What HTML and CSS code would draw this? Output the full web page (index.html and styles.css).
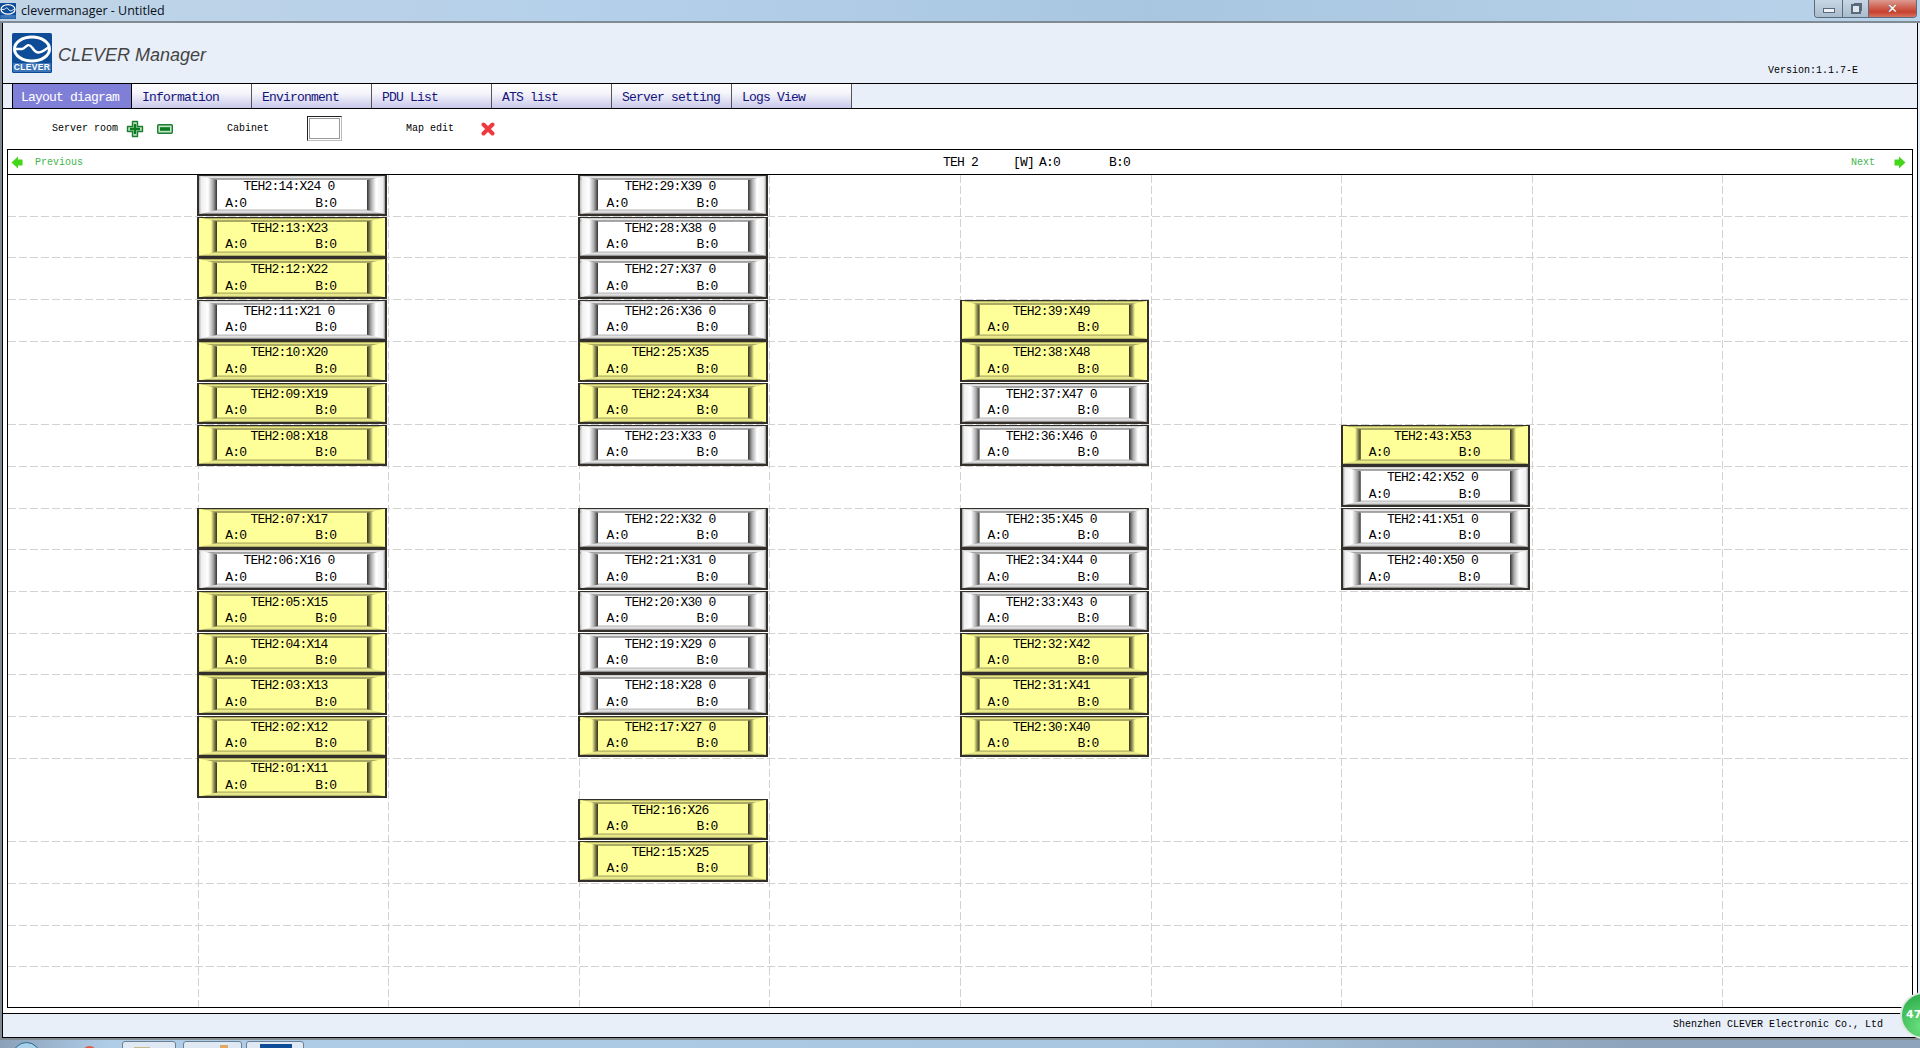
FILE: index.html
```html
<!DOCTYPE html>
<html lang="en">
<head>
  <meta charset="UTF-8" />
  <title>clevermanager - Untitled</title>
  <link rel="stylesheet" href="styles.css">
</head>
<body>
  <svg class="defs" width="0" height="0">
    <symbol id="logo" viewBox="0 0 40 40">
      <rect width="40" height="40" rx="1.5" fill="#0f4c97"/>
      <ellipse cx="20" cy="16" rx="17.5" ry="12" fill="none" stroke="#fff" stroke-width="3"/>
      <path d="M3 16 H10 C14 16 15 8 20.5 15 C25 22 29 20 37 14" fill="none" stroke="#fff" stroke-width="2.4"/>
      <rect x="1" y="30" width="38" height="9" fill="#3d76b8"/>
    </symbol>
  </svg>

  <div class="titlebar">
    <svg class="title-icon" width="16" height="16"><use href="#logo"/></svg>
    <span class="title-text">clevermanager - Untitled</span>
    <div class="win-btns">
      <span class="win-btn min"><i class="glyph-min"></i></span>
      <span class="win-btn"><i class="glyph-max"></i></span>
      <span class="win-btn close">&#x2715;</span>
    </div>
  </div>

  <div class="window">
    <header class="brand">
      <div class="logo">
        <svg width="40" height="40"><use href="#logo"/></svg>
        <span class="logo-word">CLEVER</span>
      </div>
      <span class="product">CLEVER Manager</span>
      <span class="version">Version:1.1.7-E</span>
    </header>

    <nav class="tabs">
      <a class="tab active">Layout diagram</a>
      <a class="tab">Information</a>
      <a class="tab">Environment</a>
      <a class="tab">PDU List</a>
      <a class="tab">ATS list</a>
      <a class="tab">Server setting</a>
      <a class="tab">Logs View</a>
    </nav>

    <main class="content">
      <div class="toolbar">
        <span class="tool-label room">Server room</span>
        <svg class="icon-plus" width="18" height="18" viewBox="0 0 18 18"><path d="M6.5 1.5h5v5h5v5h-5v5h-5v-5h-5v-5h5z" fill="#b5e2ba" stroke="#1c7d30" stroke-width="1.4" stroke-linejoin="round"/><path d="M7.8 4h2.4v3.8H14v2.4h-3.8V14H7.8v-3.8H4V7.8h3.8z" fill="#0d7a22"/></svg>
        <svg class="icon-minus" width="16" height="10" viewBox="0 0 16 10"><rect x=".7" y=".7" width="14.6" height="8.6" rx="1" fill="#bfe6c4" stroke="#1c7d30" stroke-width="1.4"/><rect x="3" y="3.2" width="10" height="3.6" fill="#0d7a22"/></svg>
        <span class="tool-label cabinet">Cabinet</span>
        <span class="cabinet-box"></span>
        <span class="tool-label map">Map edit</span>
        <svg class="icon-x" width="14" height="14" viewBox="0 0 14 14"><path d="M2.5 2.5 L11.5 11.5 M11.5 2.5 L2.5 11.5" stroke="#ec3a3e" stroke-width="4" stroke-linecap="round"/></svg>
      </div>

      <section class="panel">
        <div class="panel-head">
          <div class="pager">
            <svg width="12" height="13" viewBox="0 0 12 13"><path d="M0.5 6.5 L7 0.5 V3.5 H11.5 V9.5 H7 V12.5Z" fill="#43d61a"/></svg>
            <span class="pager-text prev">Previous</span>
          </div>
          <div class="room-info">
            <span class="room-name">TEH 2</span>
            <span class="room-unit">[W]</span>
            <span class="room-a">A:0</span>
            <span class="room-b">B:0</span>
          </div>
          <div class="pager next-wrap">
            <span class="pager-text">Next</span>
            <svg width="12" height="13" viewBox="0 0 12 13"><path d="M11.5 6.5 L5 0.5 V3.5 H0.5 V9.5 H5 V12.5Z" fill="#43d61a"/></svg>
          </div>
        </div>

        <div class="floor">
          <!-- column 2 -->
          <div class="cab off c2 r1"><b>TEH2:14:X24 0</b><p><span>A:0</span><span>B:0</span></p></div>
          <div class="cab on c2 r2"><b>TEH2:13:X23</b><p><span>A:0</span><span>B:0</span></p></div>
          <div class="cab on c2 r3"><b>TEH2:12:X22</b><p><span>A:0</span><span>B:0</span></p></div>
          <div class="cab off c2 r4"><b>TEH2:11:X21 0</b><p><span>A:0</span><span>B:0</span></p></div>
          <div class="cab on c2 r5"><b>TEH2:10:X20</b><p><span>A:0</span><span>B:0</span></p></div>
          <div class="cab on c2 r6"><b>TEH2:09:X19</b><p><span>A:0</span><span>B:0</span></p></div>
          <div class="cab on c2 r7"><b>TEH2:08:X18</b><p><span>A:0</span><span>B:0</span></p></div>
          <div class="cab on c2 r9"><b>TEH2:07:X17</b><p><span>A:0</span><span>B:0</span></p></div>
          <div class="cab off c2 r10"><b>TEH2:06:X16 0</b><p><span>A:0</span><span>B:0</span></p></div>
          <div class="cab on c2 r11"><b>TEH2:05:X15</b><p><span>A:0</span><span>B:0</span></p></div>
          <div class="cab on c2 r12"><b>TEH2:04:X14</b><p><span>A:0</span><span>B:0</span></p></div>
          <div class="cab on c2 r13"><b>TEH2:03:X13</b><p><span>A:0</span><span>B:0</span></p></div>
          <div class="cab on c2 r14"><b>TEH2:02:X12</b><p><span>A:0</span><span>B:0</span></p></div>
          <div class="cab on c2 r15"><b>TEH2:01:X11</b><p><span>A:0</span><span>B:0</span></p></div>
          <!-- column 4 -->
          <div class="cab off c4 r1"><b>TEH2:29:X39 0</b><p><span>A:0</span><span>B:0</span></p></div>
          <div class="cab off c4 r2"><b>TEH2:28:X38 0</b><p><span>A:0</span><span>B:0</span></p></div>
          <div class="cab off c4 r3"><b>TEH2:27:X37 0</b><p><span>A:0</span><span>B:0</span></p></div>
          <div class="cab off c4 r4"><b>TEH2:26:X36 0</b><p><span>A:0</span><span>B:0</span></p></div>
          <div class="cab on c4 r5"><b>TEH2:25:X35</b><p><span>A:0</span><span>B:0</span></p></div>
          <div class="cab on c4 r6"><b>TEH2:24:X34</b><p><span>A:0</span><span>B:0</span></p></div>
          <div class="cab off c4 r7"><b>TEH2:23:X33 0</b><p><span>A:0</span><span>B:0</span></p></div>
          <div class="cab off c4 r9"><b>TEH2:22:X32 0</b><p><span>A:0</span><span>B:0</span></p></div>
          <div class="cab off c4 r10"><b>TEH2:21:X31 0</b><p><span>A:0</span><span>B:0</span></p></div>
          <div class="cab off c4 r11"><b>TEH2:20:X30 0</b><p><span>A:0</span><span>B:0</span></p></div>
          <div class="cab off c4 r12"><b>TEH2:19:X29 0</b><p><span>A:0</span><span>B:0</span></p></div>
          <div class="cab off c4 r13"><b>TEH2:18:X28 0</b><p><span>A:0</span><span>B:0</span></p></div>
          <div class="cab on c4 r14"><b>TEH2:17:X27 0</b><p><span>A:0</span><span>B:0</span></p></div>
          <div class="cab on c4 r16"><b>TEH2:16:X26</b><p><span>A:0</span><span>B:0</span></p></div>
          <div class="cab on c4 r17"><b>TEH2:15:X25</b><p><span>A:0</span><span>B:0</span></p></div>
          <!-- column 6 -->
          <div class="cab on c6 r4"><b>TEH2:39:X49</b><p><span>A:0</span><span>B:0</span></p></div>
          <div class="cab on c6 r5"><b>TEH2:38:X48</b><p><span>A:0</span><span>B:0</span></p></div>
          <div class="cab off c6 r6"><b>TEH2:37:X47 0</b><p><span>A:0</span><span>B:0</span></p></div>
          <div class="cab off c6 r7"><b>TEH2:36:X46 0</b><p><span>A:0</span><span>B:0</span></p></div>
          <div class="cab off c6 r9"><b>TEH2:35:X45 0</b><p><span>A:0</span><span>B:0</span></p></div>
          <div class="cab off c6 r10"><b>THE2:34:X44 0</b><p><span>A:0</span><span>B:0</span></p></div>
          <div class="cab off c6 r11"><b>TEH2:33:X43 0</b><p><span>A:0</span><span>B:0</span></p></div>
          <div class="cab on c6 r12"><b>TEH2:32:X42</b><p><span>A:0</span><span>B:0</span></p></div>
          <div class="cab on c6 r13"><b>TEH2:31:X41</b><p><span>A:0</span><span>B:0</span></p></div>
          <div class="cab on c6 r14"><b>TEH2:30:X40</b><p><span>A:0</span><span>B:0</span></p></div>
          <!-- column 8 -->
          <div class="cab on c8 r7"><b>TEH2:43:X53</b><p><span>A:0</span><span>B:0</span></p></div>
          <div class="cab off c8 r8"><b>TEH2:42:X52 0</b><p><span>A:0</span><span>B:0</span></p></div>
          <div class="cab off c8 r9"><b>TEH2:41:X51 0</b><p><span>A:0</span><span>B:0</span></p></div>
          <div class="cab off c8 r10"><b>TEH2:40:X50 0</b><p><span>A:0</span><span>B:0</span></p></div>
        </div>
      </section>
    </main>

    <footer class="status">Shenzhen CLEVER Electronic Co., Ltd</footer>
  </div>

  <div class="taskbar">
    <span class="orb"></span>
    <span class="red-dot"></span>
    <span class="task-btn first"></span>
    <span class="task-btn second"></span>
    <span class="task-btn third"></span>
  </div>

  <div class="badge">47</div>
</body>
</html>
```
FILE: styles.css
```css
* { box-sizing: border-box; }
html, body {
  margin: 0;
  height: 1048px;
  overflow: hidden;
}
body {
  position: relative;
  display: flex;
  flex-direction: column;
  width: 1920px;
  background: #8ba1b8;
  font-family: "Liberation Mono", monospace;
  color: #000;
}
.defs { position: absolute; }

/* window chrome */
.titlebar {
  height: 21px;
  display: flex;
  align-items: center;
  background: linear-gradient(90deg, #c0d4e6 0, #b5d0ea 30%, #a9c6e0 60%, #b9d3ea 100%);
}
.title-text {
  margin-left: 5px;
  font: 12.5px "Open Sans", sans-serif;
  color: #0a1020;
}
.win-btns {
  margin-left: auto;
  margin-right: 3px;
  height: 18px;
  align-self: flex-start;
  display: flex;
  border: 1px solid #5b6b7c;
  border-top: 0;
  border-radius: 0 0 4px 4px;
  overflow: hidden;
}
.win-btn {
  width: 26px;
  display: flex;
  align-items: center;
  justify-content: center;
  background: linear-gradient(#c8d6e4, #a9bccd);
  border-right: 1px solid #5b6b7c;
}
.win-btn.min { width: 28px; }
.win-btn.close {
  width: 47px;
  border-right: 0;
  color: #fff;
  font: bold 13px "DejaVu Sans", sans-serif;
  text-shadow: 0 0 1px #555;
  background: linear-gradient(#dc9a90, #c8402e 70%, #d5735f);
}
.glyph-min {
  width: 12px;
  height: 5px;
  margin-top: 4px;
  background: #eef2f6;
  border: 1px solid #596a7b;
}
.glyph-max {
  width: 10px;
  height: 10px;
  background: #dfe6ed;
  border: 2px solid #596a7b;
  box-shadow: 2px -2px 0 -1px #596a7b;
}

.window {
  flex: 1;
  display: flex;
  flex-direction: column;
  margin-bottom: 8px;
  border: solid #7f8a93;
  border-width: 2px 0 2px 2px;
  background: #e8eff9;
}

/* header */
.brand {
  height: 61px;
  display: flex;
  align-items: flex-end;
  padding-left: 9px;
  border-left: 1px solid #000;
  border-bottom: 1px solid #000;
  margin-right: 2px;
  border-right: 1px solid #000;
}
.logo {
  position: relative;
  width: 40px;
  height: 40px;
  margin-bottom: 10px;
}
.logo-word {
  position: absolute;
  left: 1px;
  right: 1px;
  bottom: 1px;
  text-align: center;
  font: bold 8.5px/9px "Liberation Sans", sans-serif;
  letter-spacing: 0.3px;
  color: #fff;
}
.product {
  margin: 0 0 17px 6px;
  font: italic 18px/22px "Liberation Sans", sans-serif;
  color: #444;
}
.version {
  margin-left: auto;
  margin-right: 59px;
  margin-bottom: 6px;
  font-size: 10px;
  line-height: 12px;
}

/* tabs */
.tabs {
  height: 25px;
  display: flex;
  padding-left: 9px;
  border-left: 1px solid #000;
  border-right: 1px solid #000;
  border-bottom: 1px solid #000;
  margin-right: 2px;
}
.tab {
  width: 120px;
  padding: 3px 0 0 10px;
  font-size: 13px;
  line-height: 21px;
  letter-spacing: -0.8px;
  color: #14147a;
  background: linear-gradient(#fff, #f4f4fb 40%, #c9c8ea);
  border-right: 1px solid #555;
}
.tab.active {
  padding-left: 8px;
  color: #fff;
  background: #7f7fd8;
  border-left: 1px solid #000;
  border-right: 1px solid #000;
}

/* main area */
.content {
  flex: 1;
  display: flex;
  flex-direction: column;
  background: #fff;
  padding: 0 4px 0 4px;
  border-left: 1px solid #000;
  border-right: 1px solid #000;
  border-bottom: 1px solid #000;
  margin-right: 2px;
}
.toolbar {
  height: 40px;
  display: flex;
  align-items: center;
  padding-bottom: 1px;
}
.tool-label { font-size: 10px; }
.room { margin-left: 45px; }
.icon-plus { margin-left: 8px; }
.icon-minus { margin-left: 13px; }
.cabinet { margin-left: 54px; }
.cabinet-box {
  width: 35px;
  height: 25px;
  margin-left: 38px;
  background: #fff;
  border: 1px solid;
  border-color: #222 #bbb #bbb #222;
  box-shadow: inset 0 0 0 1px #fff, inset 0 0 0 2px #999;
}
.map { margin-left: 64px; }
.icon-x { margin-left: 27px; }

.panel {
  height: 859px;
  display: flex;
  flex-direction: column;
  border: 1px solid #000;
}
.panel-head {
  position: relative;
  height: 25px;
  flex: none;
  display: flex;
  align-items: center;
  justify-content: space-between;
  padding: 0 6px 0 3px;
  border-bottom: 1px solid #000;
}
.pager {
  display: flex;
  align-items: center;
}
.pager-text {
  font-size: 10px;
  color: #3fb64c;
}
.prev { margin-left: 12px; }
.next-wrap svg { margin-left: 19px; }
.room-info {
  position: absolute;
  left: 935px;
  top: 5px;
  display: flex;
  font-size: 13px;
  line-height: 16px;
  letter-spacing: -0.8px;
}
.room-unit { margin-left: 35px; }
.room-a { margin-left: 5px; }
.room-b { margin-left: 49px; }

/* cabinet map: dashed grid drawn behind the cabinets */
.floor {
  flex: 1;
  position: relative;
  display: grid;
  grid-template-columns: repeat(10, 190.6px);
  grid-template-rows: repeat(20, 1fr);
  overflow: hidden;
}
.floor::before, .floor::after {
  content: "";
  position: absolute;
  inset: 0;
}
.floor::before {
  background: repeating-linear-gradient(180deg, transparent 0 40.7px, #d2d2d2 40.7px 41.7px);
  -webkit-mask-image: repeating-linear-gradient(90deg, #000 0 8px, transparent 8px 11px);
  mask-image: repeating-linear-gradient(90deg, #000 0 8px, transparent 8px 11px);
}
.floor::after {
  background: repeating-linear-gradient(90deg, transparent 0 189.6px, #d2d2d2 189.6px 190.6px);
  -webkit-mask-image: repeating-linear-gradient(180deg, #000 0 8px, transparent 8px 11px);
  mask-image: repeating-linear-gradient(180deg, #000 0 8px, transparent 8px 11px);
}
.cab {
  position: relative;
  z-index: 1;
  display: flex;
  flex-direction: column;
  margin: 0 2.6px 0 -1.4px;
  height: 41px;
  padding: 3px 32px 0 26px;
  border: solid #33302c;
  border-width: 1px 2px 2px 2px;
  font-size: 13px;
  line-height: 15px;
  letter-spacing: -0.8px;
}
.cab::before, .cab::after {
  content: "";
  position: absolute;
  top: 0;
  bottom: 0;
  width: 18px;
  clip-path: polygon(0 0, 100% 4px, 100% calc(100% - 4px), 0 100%);
}
.cab::before { left: 0; }
.cab::after { right: 0; transform: scaleX(-1); }
.cab b {
  font-weight: normal;
  text-align: center;
  white-space: pre;
}
.cab p {
  display: flex;
  gap: 69px;
  margin: 1.5px 0 0;
}
.off {
  background: linear-gradient(#c8c8c8, #eee 2px, #555 3px, #fff 4px, #fff calc(100% - 5px), #bbb calc(100% - 4px), #eee calc(100% - 2px), #777);
}
.off::before, .off::after {
  background: linear-gradient(90deg, #999, #eee 2px, #fff 9px, #aaa 14px, #333 18px);
}
.on {
  background: linear-gradient(#9a9a50, #ffff99 2px, #555530 3px, #ffff99 4px, #ffff99 calc(100% - 5px), #aaaa60 calc(100% - 4px), #ffff99 calc(100% - 2px), #99995a);
}
.on::before, .on::after {
  background: linear-gradient(90deg, #ffff99, #ffff99 12px, #8d8d55 15px, #33301f 18px);
}

.c2 { grid-column: 2; }
.c4 { grid-column: 4; }
.c6 { grid-column: 6; }
.c8 { grid-column: 8; }
.r1 { grid-row: 1; }
.r2 { grid-row: 2; }
.r3 { grid-row: 3; }
.r4 { grid-row: 4; }
.r5 { grid-row: 5; }
.r6 { grid-row: 6; }
.r7 { grid-row: 7; }
.r8 { grid-row: 8; }
.r9 { grid-row: 9; }
.r10 { grid-row: 10; }
.r11 { grid-row: 11; }
.r12 { grid-row: 12; }
.r13 { grid-row: 13; }
.r14 { grid-row: 14; }
.r15 { grid-row: 15; }
.r16 { grid-row: 16; }
.r17 { grid-row: 17; }

/* footer */
.status {
  height: 24px;
  padding-right: 34px;
  text-align: right;
  font-size: 10px;
  line-height: 22px;
  border-left: 1px solid #000;
  border-right: 1px solid #000;
  border-bottom: 1px solid #000;
  margin-right: 2px;
}

/* taskbar strip */
.taskbar {
  position: absolute;
  left: 0;
  right: 0;
  bottom: 0;
  height: 8px;
  background: linear-gradient(90deg, #8ba1b8, #b0cde8 110px, #a9c6e0 60%, #8ea4bc 85%);
  overflow: hidden;
}
.orb {
  position: absolute;
  left: 12px;
  top: 2px;
  width: 29px;
  height: 29px;
  border-radius: 50%;
  border: 1px solid #24688c;
  background: #a8d0e8;
}
.red-dot {
  position: absolute;
  left: 82px;
  top: 6px;
  width: 15px;
  height: 15px;
  border-radius: 50%;
  background: #e05a44;
}
.task-btn {
  position: absolute;
  top: 1px;
  height: 20px;
  background: #dfe9f3;
  border: 1px solid #6d7f90;
  border-radius: 3px 3px 0 0;
}
.task-btn::after {
  content: "";
  position: absolute;
  top: 4px;
  height: 10px;
}
.first { left: 122px; width: 54px; }
.first::after { left: 11px; top: 5px; width: 16px; background: #c8b98a; }
.second { left: 183px; width: 59px; }
.second::after { left: 36px; top: 3px; width: 8px; background: #e0a860; }
.third { left: 246px; width: 58px; }
.third::after { left: 13px; top: 2px; width: 32px; background: #0f4c97; }

.badge {
  position: absolute;
  left: 1900px;
  top: 992px;
  width: 47px;
  height: 47px;
  padding: 14px 0 0 4px;
  border-radius: 50%;
  font: bold 11px "DejaVu Sans", sans-serif;
  color: #fff;
  background: radial-gradient(circle at 45% 75%, #6be07f, #36b552 70%);
  border: 2px solid #dfe7e3;
}
```
